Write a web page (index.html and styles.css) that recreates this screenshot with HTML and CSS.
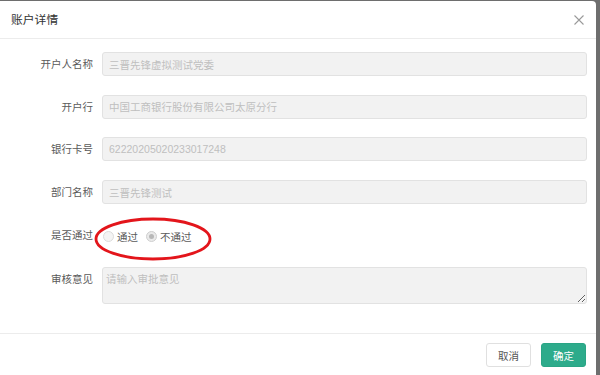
FILE: index.html
```html
<!DOCTYPE html>
<html lang="zh-CN">
<head>
    <meta charset="UTF-8">
    <title>账户详情</title>
    <link rel="stylesheet" href="styles.css">
</head>
<body>

<div class="dialog">
    <div class="dialog-header">
        <span class="dialog-title">账户详情</span>
        <span class="dialog-close">
            <svg width="10" height="10" viewBox="0 0 10 10"><path d="M0.5 0.5L9.5 9.5M9.5 0.5L0.5 9.5" stroke="#9a9a9a" stroke-width="1.1" fill="none"/></svg>
        </span>
    </div>

    <form class="dialog-body">
        <div class="form-item">
            <label class="form-label">开户人名称</label>
            <input class="form-input" type="text" value="三晋先锋虚拟测试党委" disabled>
        </div>
        <div class="form-item">
            <label class="form-label">开户行</label>
            <input class="form-input" type="text" value="中国工商银行股份有限公司太原分行" disabled>
        </div>
        <div class="form-item">
            <label class="form-label">银行卡号</label>
            <input class="form-input num" type="text" value="62220205020233017248" disabled>
        </div>
        <div class="form-item">
            <label class="form-label">部门名称</label>
            <input class="form-input" type="text" value="三晋先锋测试" disabled>
        </div>
        <div class="form-item">
            <label class="form-label">是否通过</label>
            <div class="radio-group">
                <span class="radio"><span class="radio-dot"></span>通过</span>
                <span class="radio checked"><span class="radio-dot"></span>不通过</span>
            </div>
        </div>
        <div class="form-item">
            <label class="form-label">审核意见</label>
            <textarea class="form-textarea" placeholder="请输入审批意见" disabled></textarea>
        </div>

        <!-- red mark drawn over the radios -->
        <svg class="mark" width="120" height="46" viewBox="0 0 120 46">
            <ellipse cx="60" cy="23" rx="57" ry="20" fill="none" stroke="#e3151b" stroke-width="2.8"/>
        </svg>
    </form>

    <div class="dialog-footer">
        <button type="button" class="btn btn-cancel">取消</button>
        <button type="button" class="btn btn-ok">确定</button>
    </div>
</div>

</body>
</html>
```

FILE: styles.css
```css
body {
    margin: 0;
    padding: 1px 0 0 0;
    background-color: #6e6e6e;
    font-family: "Liberation Sans", "Noto Sans CJK SC", sans-serif;
    height: 374px;
    overflow: hidden;
}
.dialog {
    width: 596px;
    height: 380px;
    background: #fff;
    border-radius: 0 4px 0 0;
}
.dialog-header {
    height: 37px;
    border-bottom: 1px solid #ececec;
    display: flex;
    align-items: center;
    justify-content: space-between;
    padding: 0 12px 0 11px;
}
.dialog-title {
    font-size: 11.8px;
    color: #333;
    line-height: 14px;
}
.dialog-close {
    display: flex;
}
.dialog-body {
    position: relative;
    padding: 13px 9px 29px 0;
    display: flex;
    flex-direction: column;
    gap: 18.7px;
    border-bottom: 1px solid #ececec;
}
.form-item {
    display: flex;
    align-items: flex-start;
}
.form-label {
    width: 102px;
    box-sizing: border-box;
    padding-right: 9px;
    text-align: right;
    font-size: 10.5px;
    line-height: 24px;
    color: #5a5a5a;
}
.form-input, .form-textarea {
    flex: 1;
    box-sizing: border-box;
    height: 24px;
    margin: 0;
    padding: 0 6px;
    border: 1px solid #e2e2e2;
    border-radius: 3px;
    background: #f2f2f2;
    font-family: "Liberation Sans", "Noto Sans CJK SC", sans-serif;
    font-size: 10.5px;
    color: #bfbfbf;
    outline: none;
}
.form-textarea {
    height: 37px;
    padding: 4px 3px;
    line-height: 14px;
    resize: vertical;
}
.form-textarea::placeholder {
    color: #bfbfbf;
}
.radio-group {
    display: flex;
    align-items: center;
    height: 24px;
    gap: 8px;
    padding-left: 1px;
    padding-top: 2px;
}
.radio {
    display: flex;
    align-items: center;
    gap: 3px;
    font-size: 10.5px;
    color: #5a5a5a;
}
.radio-dot {
    width: 9px;
    height: 9px;
    border: 1px solid #dcdcdc;
    border-radius: 50%;
    background: #f4f4f4;
    position: relative;
}
.radio.checked .radio-dot {
    background: #eaeaea;
    border-color: #cfcfcf;
}
.radio.checked .radio-dot::after {
    content: "";
    position: absolute;
    left: 2px;
    top: 2px;
    width: 5px;
    height: 5px;
    border-radius: 50%;
    background: #b8b8b8;
}
.mark {
    position: absolute;
    left: 93px;
    top: 177px;
}
.dialog-footer {
    display: flex;
    justify-content: flex-end;
    gap: 10px;
    padding: 9px 10px 0 0;
}
.btn {
    width: 45px;
    height: 24px;
    border-radius: 3px;
    font-family: "Liberation Sans", "Noto Sans CJK SC", sans-serif;
    font-size: 10.5px;
    padding: 0;
    cursor: pointer;
}
.btn-cancel {
    background: #fff;
    border: 1px solid #e0e0e0;
    color: #555;
}
.btn-ok {
    background: #2dab8b;
    border: 1px solid #2aa585;
    color: #fff;
}
```
